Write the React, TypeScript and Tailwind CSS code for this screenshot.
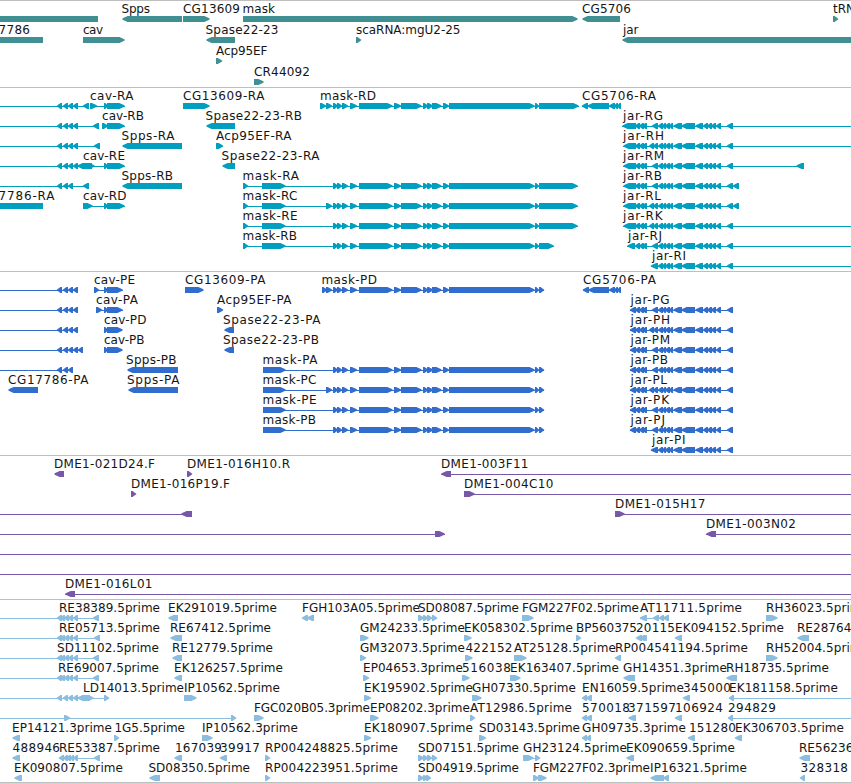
type Dir = 'L' | 'R' | 'N'
// row, direction, blocks, connector, label, label start, label end
type Feature = [number, Dir, string, string?, string?, number?, number?]

const MASK = ' 333-338 337-342 342-348 350-357 359-393 394-401 401-422 423-428 427-433 432-442 443-449 449-535 535-539'
const JAR_END = ' 658-663 662-666 665-670 669-673 673-682 681-695 695-703 703-708 707-712 711-716 716-721 727-733'
const JAR = ' 635-640 639-644 642-647 652-658' + JAR_END
const JAR_X = ' 635-640 639-644 642-647 649-654 653-658' + JAR_END
const L3 = '57-62 63-68 68-73'
const L4 = L3 + ' 73-78'
const EST = '57-62 60-65 64-69 68-73 73-78'

const genes: Feature[] = [
  [0, 'N', '-9-98'],
  [0, 'L', '122-182', '', 'Spps', 121.5, 150],
  [0, 'R', '183-210', '', 'CG13609', 183, 240],
  [0, 'R', '243-578', '', 'mask', 242.5, 275],
  [0, 'L', '582-620', '', 'CG5706', 582, 631],
  [0, 'R', '833-838', '', 'tRN', 833, 855],
  [1, 'N', '-9-43', '', '7786', -1.5, 30],
  [1, 'R', '83-125', '', 'cav', 83, 103],
  [1, 'L', '206-235', '', 'Spase22-23', 205.5, 278.5],
  [1, 'R', '356-361', '', 'scaRNA:mgU2-25', 356, 460.5],
  [1, 'L', '622-860', '', 'jar', 623, 638.5],
  [2, 'R', '216-222', '', 'Acp95EF', 216, 267.5],
  [3, 'R', '254-264', '', 'CR44092', 254, 310],
]

const transcripts: Feature[] = [
  [0, 'L', L4 + ' 83-89', '0-89'],
  [0, 'R', '90-97 104-108 107-125', '90-125', 'cav-RA', 90, 133.5],
  [0, 'R', '183-210', '', 'CG13609-RA', 183, 264.5],
  [0, 'R', '320-326 326-332' + MASK + ' 539-579', '320-579', 'mask-RD', 320, 376],
  [0, 'L', '582-588 587-609 609-615 614-618 617-621', '582-621', 'CG5706-RA', 582, 656],
  [1, 'L', L4 + ' 93-99', '0-99'],
  [1, 'R', '102-108 107-125', '102-125', 'cav-RB', 102, 144],
  [1, 'L', '206-235', '', 'Spase22-23-RB', 205.5, 302],
  [1, 'L', '622-636' + JAR, '622-851', 'jar-RG', 623, 663],
  [2, 'L', L4 + ' 94-100', '0-100'],
  [2, 'L', '122-182', '', 'Spps-RA', 121.5, 174.5],
  [2, 'R', '216-220 217-223', '', 'Acp95EF-RA', 216, 291.5],
  [2, 'L', '623-636' + JAR_X, '623-851', 'jar-RH', 623, 664],
  [3, 'L', L4 + ' 77-92', '0-92'],
  [3, 'R', '82-95 104-108 107-125', '82-125', 'cav-RE', 83, 125],
  [3, 'L', '222-235', '', 'Spase22-23-RA', 221.5, 319.5],
  [3, 'L', '623-636' + JAR + ' 796-804', '623-804', 'jar-RM', 623, 664],
  [4, 'L', L3 + ' 83-89', '0-89'],
  [4, 'L', '122-182', '', 'Spps-RB', 121.5, 173],
  [4, 'R', '243-248 262-286' + MASK + ' 539-578', '243-578', 'mask-RA', 242.5, 299],
  [4, 'L', '623-636' + JAR + ' 733-739', '623-739', 'jar-RB', 623, 662],
  [5, 'N', '-9-43', '', '7786-RA', -1.5, 54.5],
  [5, 'R', '83-93 104-108 107-125', '83-125', 'cav-RD', 83, 126.5],
  [5, 'R', '243-248 262-286 326-332' + MASK + ' 539-578', '243-578', 'mask-RC', 242.5, 297.5],
  [5, 'L', '623-636' + JAR_X + ' 733-739', '623-739', 'jar-RL', 623, 661],
  [6, 'R', '243-248 262-286' + MASK + ' 539-578', '243-578', 'mask-RE', 242.5, 297.5],
  [6, 'L', '623-636' + JAR_X, '623-851', 'jar-RK', 623, 662.5],
  [7, 'R', '243-248 262-286' + MASK + ' 539-554', '243-554', 'mask-RB', 242.5, 297],
  [7, 'L', '627-635' + JAR, '627-851', 'jar-RJ', 628, 662],
  [8, 'L', '651-658' + JAR_END, '651-851', 'jar-RI', 652, 686],
]

const proteins: Feature[] = [
  [0, 'L', L4, '0-78'],
  [0, 'R', '94-99 104-108 107-123', '94-123', 'cav-PE', 94, 135],
  [0, 'R', '185-204', '', 'CG13609-PA', 185, 265.5],
  [0, 'R', '322-327 326-332' + MASK + ' 539-544', '322-544', 'mask-PD', 321.5, 377],
  [0, 'L', '583-589 588-609 609-615 614-618 617-621', '583-621', 'CG5706-PA', 583, 656],
  [1, 'L', L4, '0-78'],
  [1, 'R', '96-102 104-108 107-123', '96-123', 'cav-PA', 96, 138],
  [1, 'R', '217-223', '', 'Acp95EF-PA', 217, 291.5],
  [1, 'L', '630-636' + JAR, '630-733', 'jar-PG', 630.5, 669.5],
  [2, 'L', L4, '0-78'],
  [2, 'R', '104-108 107-123', '', 'cav-PD', 104, 146.5],
  [2, 'L', '224-234', '', 'Spase22-23-PA', 223, 320.5],
  [2, 'L', '630-636' + JAR_X, '630-733', 'jar-PH', 630.5, 670],
  [3, 'L', L4 + ' 78-83', '0-83'],
  [3, 'R', '104-108 107-123', '', 'cav-PB', 104, 144.5],
  [3, 'L', '224-234', '', 'Spase22-23-PB', 223, 319],
  [3, 'L', '630-636' + JAR, '630-733', 'jar-PM', 630.5, 670],
  [4, 'L', L3, '0-73'],
  [4, 'L', '127-178', '', 'Spps-PB', 126, 176.5],
  [4, 'R', '263-286' + MASK + ' 539-544', '263-544', 'mask-PA', 262.5, 317.5],
  [4, 'L', '630-636' + JAR, '630-733', 'jar-PB', 630.5, 668],
  [5, 'L', '8-38', '', 'CG17786-PA', 8, 88.5],
  [5, 'L', '128-178', '', 'Spps-PA', 127, 179.5],
  [5, 'R', '263-286 326-332' + MASK + ' 539-544', '263-544', 'mask-PC', 262.5, 316.5],
  [5, 'L', '630-636' + JAR_X, '630-733', 'jar-PL', 630.5, 667],
  [6, 'R', '263-286' + MASK + ' 539-544', '263-544', 'mask-PE', 262.5, 316.5],
  [6, 'L', '630-636' + JAR, '630-733', 'jar-PK', 630.5, 669],
  [7, 'R', '263-286' + MASK + ' 539-544', '263-544', 'mask-PB', 262.5, 316],
  [7, 'L', '630-636' + JAR, '630-733', 'jar-PJ', 630.5, 665],
  [8, 'L', '651-658' + JAR_END, '651-733', 'jar-PI', 652, 685.5],
]

const clones: Feature[] = [
  [0, 'L', '54-64', '', 'DME1-021D24.F', 53, 154],
  [0, 'R', '187-192', '', 'DME1-016H10.R', 186, 289],
  [0, 'L', '441-451', '441-851', 'DME1-003F11', 440, 527.5],
  [1, 'R', '131-136', '', 'DME1-016P19.F', 130, 229],
  [1, 'R', '464-475', '464-851', 'DME1-004C10', 463, 552.5],
  [2, 'L', '181-192', '0-192'],
  [2, 'R', '615-625', '615-851', 'DME1-015H17', 614, 704.5],
  [3, 'R', '435-445', '0-445'],
  [3, 'L', '706-716', '706-851', 'DME1-003N02', 705, 795],
  [4, 'N', '', '0-851'],
  [5, 'N', '', '0-851'],
  [6, 'L', '65-75', '65-851', 'DME1-016L01', 64, 151.5],
]

const ests: Feature[] = [
  [0, 'L', EST + ' 93-99', '0-99', 'RE38389.5prime', 58, 159],
  [0, 'L', '168-178', '', 'EK291019.5prime', 167, 276],
  [0, 'L', '302-308 307-314', '', 'FGH103A05.5prime', 301, 419],
  [0, 'R', '418-424 423-428 427-432 432-437', '418-437', 'SD08087.5prime', 417, 518],
  [0, 'R', '522-534', '', 'FGM227F02.5prime', 521, 638],
  [0, 'L', '640-647 653-659 659-664 663-669', '640-669', 'AT11711.5prime', 639, 741],
  [0, 'R', '766-778', '', 'RH36023.5prime', 765, 868],
  [1, 'L', EST + ' 94-100', '0-100', 'RE05713.5prime', 58, 159],
  [1, 'L', '170-182', '', 'RE67412.5prime', 169, 270],
  [1, 'R', '360-369', '', 'GM24233.5prime', 359, 464],
  [1, 'R', '464-472', '', 'EK058302.5prime', 463, 572],
  [1, 'R', '576-581', '', 'BP560375', 575, 636],
  [1, 'L', '636-642 640-645 643-647', '', '20115', 635, 674],
  [1, 'L', '675-682', '', 'EK094152.5prime', 674, 783],
  [1, 'L', '797-809', '', 'RE28764.5prime', 796, 897],
  [2, 'L', EST + ' 93-99', '0-99', 'SD11102.5prime', 56, 158],
  [2, 'L', '172-182', '', 'RE12779.5prime', 171, 272],
  [2, 'R', '360-366', '', 'GM32073.5prime', 359, 464],
  [2, 'R', '465-473', '', '422152', 464.5, 511.5],
  [2, 'R', '514-527', '', 'AT25128.5prime', 513, 615],
  [2, 'L', '615-621', '', 'RP004541194.5prime', 614, 747],
  [2, 'R', '766-778', '', 'RH52004.5prime', 765, 868],
  [3, 'L', EST + ' 93-99', '0-99', 'RE69007.5prime', 57, 158],
  [3, 'L', '174-182', '', 'EK126257.5prime', 173, 282],
  [3, 'R', '363-369', '', 'EP04653.3prime', 362, 462],
  [3, 'R', '462-470', '', '516038', 461, 510],
  [3, 'R', '510-521', '', 'EK163407.5prime', 509, 618],
  [3, 'L', '623-635', '', 'GH14351.3prime', 622, 726],
  [3, 'L', '726-737', '', 'RH18735.5prime', 725, 828],
  [4, 'L', L4 + ' 77-90', '0-109'],
  [4, 'R', '82-94 104-109', '', 'LD14013.5prime', 82, 183],
  [4, 'R', '184-197', '', 'IP10562.5prime', 183, 279],
  [4, 'R', '364-371', '', 'EK195902.5prime', 363, 472],
  [4, 'R', '472-482', '', 'GH07330.5prime', 471, 575],
  [4, 'L', '582-587 586-592', '', 'EN16059.5prime', 581, 683],
  [4, 'L', '683-690', '', '345000', 682, 730],
  [4, 'L', '729-734', '729-851', 'EK181158.5prime', 728, 837],
  [5, 'R', '64-70 231-236', '0-236'],
  [5, 'R', '254-264', '', 'FGC020B05.3prime', 253, 369],
  [5, 'R', '370-379', '', 'EP08202.3prime', 369, 469],
  [5, 'R', '470-475', '', 'AT12986.5prime', 469, 571],
  [5, 'L', '582-587 586-592', '', '570018', 581, 629],
  [5, 'L', '628-636', '', '371597', 627, 675],
  [5, 'L', '675-682', '', '106924', 674, 722],
  [5, 'L', '728-733', '728-851', '294829', 727, 775],
  [6, 'L', '12-20', '', 'EP14121.3prime', 11, 111],
  [6, 'R', '114-119', '', '1G5.5prime', 113.5, 184],
  [6, 'R', '202-213', '', 'IP10562.3prime', 201, 297],
  [6, 'R', '364-371', '', 'EK180907.5prime', 363, 472],
  [6, 'R', '479-486', '', 'SD03143.5prime', 478, 579],
  [6, 'L', '582-587 586-591', '', 'GH09735.3prime', 581, 685],
  [6, 'L', '688-695', '', '151280', 688, 735],
  [6, 'L', '735-742', '', 'EK306703.5prime', 734, 843],
  [7, 'L', '12-20', '', '488946', 11.5, 59],
  [7, 'L', '59-64 63-68 66-71 70-74 73-78 94-100', '59-100', 'RE53387.5prime', 58, 159],
  [7, 'L', '174-182', '', '167039', 174, 221],
  [7, 'L', '220-227', '', '39917', 219, 259],
  [7, 'R', '265-270', '', 'RP004248825.5prime', 264, 397],
  [7, 'R', '418-424 423-428 427-432 432-437', '418-437', 'SD07151.5prime', 417, 518],
  [7, 'R', '523-534 535-540', '523-540', 'GH23124.5prime', 522, 626],
  [7, 'L', '626-634', '', 'EK090659.5prime', 625, 734],
  [7, 'L', '799-810', '', 'RE56236.5prime', 798, 899],
  [8, 'L', '14-22', '', 'EK090807.5prime', 13, 122],
  [8, 'L', '149-160', '', 'SD08350.5prime', 147.5, 249],
  [8, 'R', '265-270', '', 'RP004223951.5prime', 264, 397],
  [8, 'R', '418-424 423-428 426-431', '', 'SD04919.5prime', 417, 518],
  [8, 'R', '533-539 538-547', '', 'FGM227F02.3prime', 532, 649],
  [8, 'L', '650-664 663-669', '', 'IP16321.5prime', 649, 746],
  [8, 'L', '800-805', '', '328318', 799.5, 847],
]

function parseSpans(spans = ''): number[][] {
  return Array.from(spans.matchAll(/(-?\d+)-(\d+)/g), (m) => [Number(m[1]), Number(m[2])])
}

function blockPath(a: number, b: number, y: number, dir: Dir) {
  if (dir === 'N') return `M${a} ${y}H${b}V${y + 6}H${a}Z`
  const small = b - a <= 7
  const head = small ? b - a : 7
  const sign = dir === 'R' ? 1 : -1
  const tip = (dir === 'R' ? b : a) + (small ? 0.5 * sign : 0)
  const tail = dir === 'R' ? a : b
  const shoulder = tip - sign * head * 0.8
  const nose = tip - sign * 1.2
  return `M${tail} ${y}H${shoulder}L${nose} ${y + 2}L${tip} ${y + 3}L${nose} ${y + 4}L${shoulder} ${y + 6}H${tail}Z`
}

interface TrackProps {
  features: Feature[]
  pitch?: number
  labelShift?: number
  className: string
}

function Track({ features, pitch = 20, labelShift = 0, className }: TrackProps) {
  return (
    <section className={`w-full shrink-0 overflow-hidden border-t border-[#bebebe] ${className}`}>
      <svg className="block h-full w-[851px]">
        {features.map(([row, dir, blocks, line], i) => {
          const y = row * pitch + 15
          return (
            <g key={i} fill="currentColor">
              {parseSpans(line).map(([a, b]) => (
                <rect key={a} x={a} y={y + 3} width={b - a} height={1} />
              ))}
              {parseSpans(blocks).map(([a, b]) => (
                <path key={a} d={blockPath(a, b, y, dir)} />
              ))}
            </g>
          )
        })}
        {features.map(([row, , , , label, start = 0, end = 0], i) =>
          label ? (
            <text
              key={i}
              x={start + labelShift}
              y={row * pitch + 12}
              textLength={end - start}
              className="fill-[#161616]"
            >
              {label}
            </text>
          ) : null,
        )}
      </svg>
    </section>
  )
}

export default function App() {
  return (
    <main className="flex h-[783px] w-[851px] flex-col overflow-hidden border-b border-[#bebebe] bg-white font-['DejaVu_Sans',sans-serif] text-[12px]">
      <Track features={genes} pitch={21} className="h-[87px] text-[#3f8f93]" />
      <Track features={transcripts} className="h-[184px] text-[#009fc0]" />
      <Track features={proteins} className="h-[184px] text-[#316dcc]" />
      <Track features={clones} labelShift={1} className="h-[144px] text-[#7758a8]" />
      <Track features={ests} labelShift={1} className="h-[183px] text-[#8abddf]" />
    </main>
  )
}
